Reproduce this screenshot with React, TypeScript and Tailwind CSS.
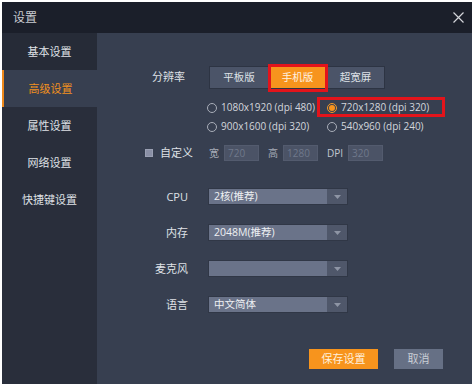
import React from 'react';

const FONT = "'Open Sans', 'Noto Sans CJK SC', sans-serif";

const navItems = ['基本设置', '高级设置', '属性设置', '网络设置', '快捷键设置'];

function Radio({ checked, label }: { checked?: boolean; label: string }) {
    return (
        <div className="flex items-center h-[19px]">
            <span className={`w-[10px] h-[10px] rounded-full border flex items-center justify-center ${checked ? 'border-[#f39a2c]' : 'border-[#a9aeb9]'}`}>
                {checked && <span className="w-[6px] h-[6px] rounded-full bg-[#f7941d]" />}
            </span>
            <span className="ml-[4px] text-[10px] text-[#d3d6dc]">{label}</span>
        </div>
    );
}

function Select({ label, value }: { label: string; value: string }) {
    return (
        <div className="flex items-center h-[17px]">
            <div className="w-[91px] text-right text-[11px] text-[#dfe1e6] leading-none">{label}</div>
            <div className="ml-[20px] w-[140px] h-[17px] flex border border-[#303746]">
                <div className="flex-1 bg-[#6a7389] text-[10.5px] text-[#eef0f3] leading-[15px] pl-[5px]">{value}</div>
                <div className="w-[20px] bg-[#4f576a] flex items-center justify-center">
                    <svg width="7" height="4" viewBox="0 0 7 4"><path d="M0 0h7L3.5 4z" fill="#8e95a5" /></svg>
                </div>
            </div>
        </div>
    );
}

function Field({ value }: { value: string }) {
    return (
        <div className="w-[35px] h-[16px] bg-[#4b5366] border border-[#535b6e] text-[10px] text-[#6f788b] leading-[14px] pl-[3px]">{value}</div>
    );
}

export default function App() {
    return (
        <div className="w-[475px] h-[387px] bg-white pt-[2px] pl-[2px]" style={{ fontFamily: FONT }}>
            <div className="w-[470px] h-[382px] flex flex-col bg-[#373f50]">
                {/* title bar */}
                <div className="h-[31px] bg-[#1b1f2a] flex items-center justify-between pl-[11px] pr-[8px]">
                    <span className="text-[12px] text-[#c9cbd1]">设置</span>
                    <svg width="11" height="11" viewBox="0 0 11 11"><path d="M0.5 0.5l10 10M10.5 0.5l-10 10" stroke="#d3d5da" strokeWidth="1.2" /></svg>
                </div>

                <div className="flex flex-1">
                    {/* sidebar */}
                    <div className="w-[95px] bg-[#292e3b] flex flex-col">
                        {navItems.map((item, i) => (
                            <div
                                key={item}
                                className={`h-[37px] pt-[2px] flex items-center justify-center text-[11px] ${i === 1 ? 'bg-[#373f50] border-l-2 border-[#f08a1c] text-[#f0901e]' : i === 0 ? 'bg-[#262b37] text-[#dfe1e6]' : 'text-[#dfe1e6]'}`}
                            >
                                {item}
                            </div>
                        ))}
                    </div>

                    {/* content */}
                    <div className="flex-1 flex flex-col pt-[34px]">
                        <div className="flex items-center h-[21px]">
                            <div className="w-[91px] text-right text-[11px] text-[#dfe1e6] pr-[3px]">分辨率</div>
                            <div className="ml-[21px] flex border border-[#2d3443] relative">
                                <div className="w-[58px] h-[21px] bg-[#4b5468] text-[10.5px] text-[#dfe2e7] flex items-center justify-center">平板版</div>
                                <div className="w-[58px] h-[21px] bg-[#f7941d] border-l border-[#ffc27a] text-[10.5px] text-[#fff1e0] flex items-center justify-center relative">
                                    手机版
                                    <div className="absolute -left-[1px] -top-[3px] w-[60px] h-[28px] border-[3px] border-[#e3141b]" />
                                </div>
                                <div className="w-[58px] h-[21px] bg-[#4b5468] border-l border-[#3c4456] text-[10.5px] text-[#dfe2e7] flex items-center justify-center">超宽屏</div>
                            </div>
                        </div>

                        <div className="mt-[10px] ml-[110px] grid grid-cols-[120px_1fr] relative">
                            <Radio label="1080x1920 (dpi 480)" />
                            <div className="relative">
                                <Radio checked label="720x1280 (dpi 320)" />
                                <div className="absolute -left-[10px] -top-[1px] w-[128px] h-[20px] border-[3px] border-[#e3141b]" />
                            </div>
                            <Radio label="900x1600 (dpi 320)" />
                            <Radio label="540x960 (dpi 240)" />
                        </div>

                        <div className="mt-[9px] flex items-center h-[16px] pl-[48px]">
                            <span className="w-[8px] h-[8px] bg-[#8a90a6] border border-[#9aa0b3]" />
                            <span className="ml-[7px] text-[11px] text-[#dfe1e6]">自定义</span>
                            <span className="ml-[16px] text-[10px] text-[#a6abb7]">宽</span>
                            <div className="ml-[5px]"><Field value="720" /></div>
                            <span className="ml-[9px] text-[10px] text-[#a6abb7]">高</span>
                            <div className="ml-[5px]"><Field value="1280" /></div>
                            <span className="ml-[9px] text-[10px] text-[#c3c7cf]">DPI</span>
                            <div className="ml-[5px]"><Field value="320" /></div>
                        </div>

                        <div className="mt-[27px] flex flex-col gap-[19px]">
                            <Select label="CPU" value="2核(推荐)" />
                            <Select label="内存" value="2048M(推荐)" />
                            <Select label="麦克风" value="" />
                            <Select label="语言" value="中文简体" />
                        </div>

                        <div className="mt-auto flex justify-end gap-[16px] pr-[29px] pb-[15px]">
                            <div className="w-[69px] h-[20px] bg-[#f7941d] text-[11px] text-[#fff0dc] flex items-center justify-center">保存设置</div>
                            <div className="w-[49px] h-[20px] bg-[#667085] text-[11px] text-[#c9cdd5] flex items-center justify-center">取消</div>
                        </div>
                    </div>
                </div>
            </div>
        </div>
    );
}
